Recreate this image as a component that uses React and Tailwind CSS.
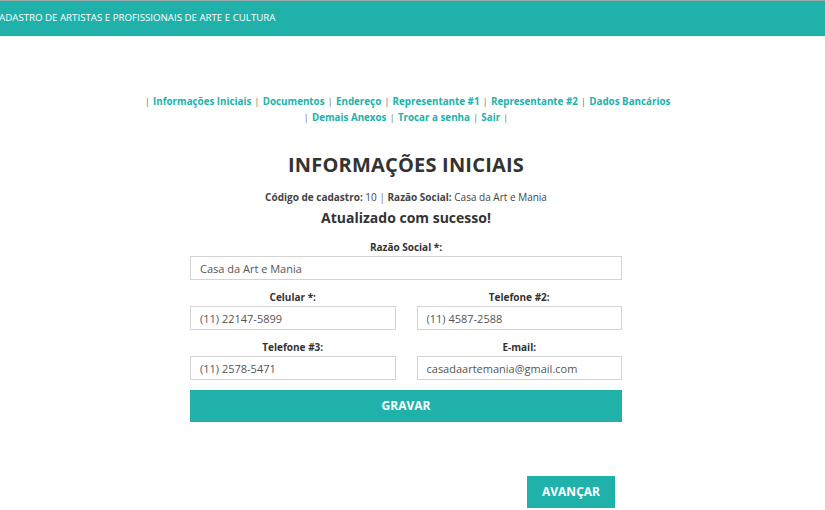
import React from "react";

/* -------------------- MENU -------------------- */

const MENU_ROW_1 = [
  "Informações Iniciais",
  "Documentos",
  "Endereço",
  "Representante #1",
  "Representante #2",
  "Dados Bancários",
];

const MENU_ROW_2 = ["Demais Anexos", "Trocar a senha", "Sair"];

const Sep = () => <span className="text-[#777] font-normal mx-[3px]">|</span>;

const MenuRow = ({ items, trailing }) => (
  <div className="leading-[16px]">
    <Sep />
    {items.map((item, i) => (
      <React.Fragment key={item}>
        <a href="#" className="text-[#20b2aa] font-bold">
          {item}
        </a>
        {(i < items.length - 1 || trailing) && <Sep />}
      </React.Fragment>
    ))}
  </div>
);

/* -------------------- FIELD -------------------- */

const Field = ({ label, value }) => (
  <div className="flex flex-col">
    <label className="text-center text-[10px] font-bold text-[#333] leading-[16px]">
      {label}
    </label>
    <input
      readOnly
      value={value}
      className="mt-[1px] h-[24px] w-full border border-[#d4d4d4] bg-white px-[9px] text-[11px] text-[#555] outline-none"
    />
  </div>
);

/* -------------------- APP -------------------- */

const App = () => {
  return (
    <div
      className="w-[825px] min-h-[510px] bg-white overflow-hidden"
      style={{ fontFamily: '"Open Sans", "Liberation Sans", sans-serif' }}
    >
      {/* Header */}
      <div className="h-[36px] border-t border-[#9aa] bg-[#20b2aa] flex items-center overflow-hidden">
        <span className="-ml-[7px] text-white text-[9.7px] whitespace-nowrap">
          CADASTRO DE ARTISTAS E PROFISSIONAIS DE ARTE E CULTURA
        </span>
      </div>
      <div className="h-px bg-[#e6f4f3]" />

      <div className="w-[812px]">
        {/* Menu */}
        <div className="mt-[57px] text-center text-[9.8px]">
          <MenuRow items={MENU_ROW_1} trailing={false} />
          <MenuRow items={MENU_ROW_2} trailing />
        </div>

        {/* Title */}
        <h1 className="mt-[25px] text-center text-[20px] font-bold text-[#333] leading-[28px] tracking-[0.2px]">
          INFORMAÇÕES INICIAIS
        </h1>
        <p className="mt-[10px] text-center text-[10px] text-[#444] leading-[16px]">
          <b>Código de cadastro:</b> 10 <span className="text-[#777]">|</span> <b>Razão Social:</b> Casa da Art e Mania
        </p>
        <p className="mt-[3px] text-center text-[14px] font-bold text-[#333] leading-[20px]">
          Atualizado com sucesso!
        </p>

        {/* Form */}
        <div className="ml-[190px] w-[432px] mt-[11px]">
          <Field label="Razão Social *:" value="Casa da Art e Mania" />
          <div className="grid grid-cols-2 gap-x-[21px] mt-[9px]">
            <Field label="Celular *:" value="(11) 22147-5899" />
            <Field label="Telefone #2:" value="(11) 4587-2588" />
          </div>
          <div className="grid grid-cols-2 gap-x-[21px] mt-[9px]">
            <Field label="Telefone #3:" value="(11) 2578-5471" />
            <Field label="E-mail:" value="casadaartemania@gmail.com" />
          </div>
          <button className="mt-[10px] h-[32px] w-full bg-[#20b2aa] text-white text-[12px] font-bold">
            GRAVAR
          </button>
        </div>

        <button className="ml-[527px] mt-[54px] h-[32px] w-[88px] bg-[#20b2aa] text-white text-[12px] font-bold">
          AVANÇAR
        </button>
      </div>
    </div>
  );
};

export default App;
